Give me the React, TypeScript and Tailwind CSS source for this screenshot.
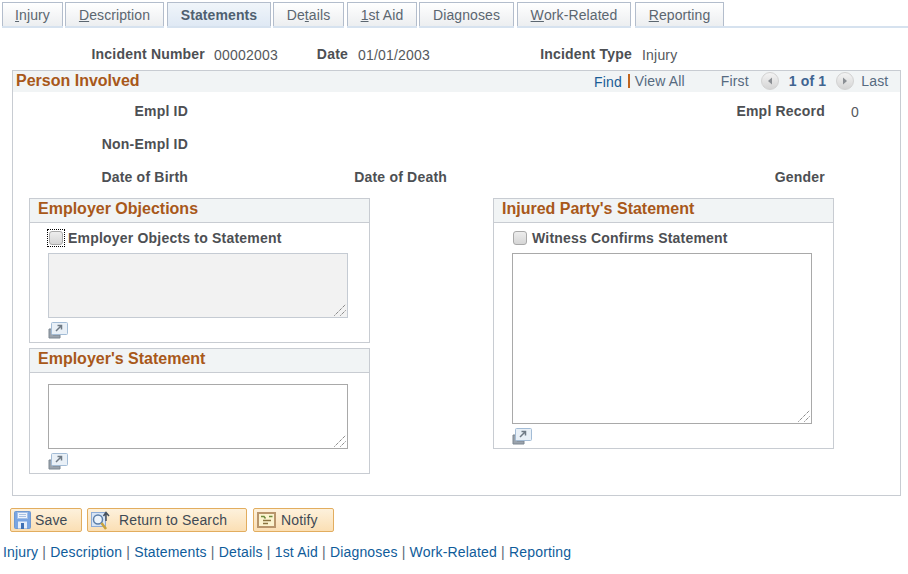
const tabs = [
  { pre: "", key: "I", post: "njury", w: "w-[61px]", ml: "ml-[2px]" },
  { pre: "", key: "D", post: "escription", w: "w-[99px]", ml: "ml-[2px]" },
  { pre: "", key: "", post: "Statements", w: "w-[104px]", ml: "ml-[3px]", active: true },
  { pre: "De", key: "t", post: "ails", w: "w-[71px]", ml: "ml-[2px]" },
  { pre: "", key: "1", post: "st Aid", w: "w-[70px]", ml: "ml-[3px]" },
  { pre: "", key: "", post: "Diagnoses", w: "w-[95px]", ml: "ml-[2px]" },
  { pre: "", key: "W", post: "ork-Related", w: "w-[114px]", ml: "ml-[3px]" },
  { pre: "", key: "R", post: "eporting", w: "w-[89px]", ml: "ml-[4px]" },
];

const links = ["Injury", "Description", "Statements", "Details", "1st Aid", "Diagnoses", "Work-Related", "Reporting"];

function ExpandIcon() {
  return (
    <svg width="20" height="17" viewBox="0 0 20 17" className="block">
      <path d="M1 7h4v6h7v3H1z" fill="#9aa3ad" stroke="#7d8791" strokeWidth="1" />
      <rect x="3.5" y="0.5" width="16" height="12" rx="1" fill="#e9f0f7" stroke="#a3bcd6" />
      <path d="M8 9l5-5M9.5 3.5h4v4" fill="none" stroke="#6f7a85" strokeWidth="1.5" />
    </svg>
  );
}

function Checkbox({ focused }: { focused?: boolean }) {
  return (
    <span className={`flex h-[16px] w-[16px] items-center justify-center ${focused ? "outline-1 outline-dotted outline-black" : ""}`}>
      <span className="block h-[14px] w-[14px] rounded-[3px] border border-[#a9a9a9] bg-gradient-to-b from-[#ededed] to-[#d6d6d6]" />
    </span>
  );
}

function Grip() {
  return (
    <svg width="12" height="12" viewBox="0 0 12 12" className="absolute bottom-[1px] right-[1px]">
      <path d="M0.5 11.5L11.5 0.5M6.5 11.5L11.5 6.5" stroke="#555" strokeWidth="1" strokeDasharray="1 1" />
    </svg>
  );
}

function NoteBox({ height, disabled }: { height: string; disabled?: boolean }) {
  return (
    <div className={`relative w-[300px] border ${height} ${disabled ? "border-[#c5cbd3] bg-[#f2f2f2]" : "border-[#a9a9a9] bg-white"}`}>
      <Grip />
    </div>
  );
}

function Group({ title, children }: { title: string; children: React.ReactNode }) {
  return (
    <div className="w-[341px] border border-[#c8ccd2]">
      <div className="h-[24px] border-b border-[#c8ccd2] bg-[#f1f4f5] pl-[8px] text-[16px] leading-[20px] font-bold text-[#a8581a]">{title}</div>
      <div className="pl-[18px]">{children}</div>
    </div>
  );
}

function CheckRow({ label, focused }: { label: string; focused?: boolean }) {
  return (
    <div className="flex h-[30px] items-center gap-[4px] pb-[1px] text-[14px] font-bold tracking-[0.2px] text-[#4d4f53]">
      <Checkbox focused={focused} />
      <span className="pt-[1px]">{label}</span>
    </div>
  );
}

function SaveIcon() {
  return (
    <svg width="17" height="18" viewBox="0 0 17 18">
      <rect x="0.5" y="0.5" width="16" height="17" rx="1" fill="#79a5e2" stroke="#6f98d0" />
      <rect x="3.5" y="1.5" width="10" height="6" fill="#eef4fc" stroke="#a5c0e6" />
      <path d="M5 3.5h7M5 5.5h7" stroke="#a9c1e2" />
      <rect x="4" y="10.5" width="9" height="7" fill="#e6eef9" />
      <rect x="7" y="12" width="3" height="6" fill="#3f70b4" />
    </svg>
  );
}

function SearchBackIcon() {
  return (
    <svg width="20" height="19" viewBox="0 0 20 19">
      <rect x="0.5" y="1.5" width="14" height="14" fill="#d7e4f5" stroke="#8dabd6" />
      <circle cx="7" cy="8.5" r="4.5" fill="#eef4fb" stroke="#5d7fa8" strokeWidth="1.5" />
      <path d="M10.5 12l4.5 6" stroke="#c9a23a" strokeWidth="2.5" />
      <path d="M15 10V2.5M12.5 5L15 1.5l3 3.5" fill="none" stroke="#47505c" strokeWidth="1.5" />
    </svg>
  );
}

function NotifyIcon() {
  return (
    <svg width="19" height="16" viewBox="0 0 19 16">
      <rect x="1" y="1" width="17" height="14" fill="#fbf3cf" stroke="#b8956c" strokeWidth="2" />
      <path d="M4 4.5h3l1.5 2M12 4.5h3.5" stroke="#6d8a3f" strokeWidth="1.5" fill="none" />
      <path d="M6 8.5h8M6 11.5h5" stroke="#8a7440" strokeWidth="1.5" />
    </svg>
  );
}

function ActionButton({ icon, label, w, gap }: { icon: React.ReactNode; label: string; w: string; gap: string }) {
  return (
    <button className={`flex h-[24px] ${w} ${gap} items-center rounded-[2px] border border-[#e2ad5f] bg-gradient-to-b from-[#fdf1dc] to-[#fbdfb4] pl-[3px] text-[14px] tracking-[0.15px] text-[#3f4a55]`}>
      {icon}
      <span>{label}</span>
    </button>
  );
}

function Arrow({ left }: { left?: boolean }) {
  return (
    <svg width="18" height="18" viewBox="0 0 18 18">
      <defs>
        <linearGradient id={left ? "al" : "ar"} x1="0" y1="0" x2="0" y2="1">
          <stop offset="0" stopColor="#f4f4f4" />
          <stop offset="1" stopColor="#d4d4d4" />
        </linearGradient>
      </defs>
      <circle cx="9" cy="9" r="8.5" fill={`url(#${left ? "al" : "ar"})`} stroke="#d2d2d2" />
      <path d={left ? "M11 5.5v7L7 9z" : "M7 5.5v7L11 9z"} fill="#8b8f94" />
    </svg>
  );
}

export default function App() {
  return (
    <div className="h-[574px] w-[908px] overflow-hidden bg-white font-['Liberation_Sans',Arial,sans-serif] text-[14px] text-[#55585c]">
      {/* tab strip */}
      <div className="flex h-[28px] items-start pt-[2px]">
        {tabs.map((t) => (
          <div key={t.post} className={`${t.ml} ${t.w} h-[26px] border-b-[2px] border-[#d6e2ef]`}>
            <div
              className={`flex h-[24px] items-center justify-center border-x-[1.5px] border-t-[1.5px] border-[#b3bdcc] pt-[1px] tracking-[0.1px] ${
                t.active ? "bg-gradient-to-b from-[#f0f5fa] to-[#dfe9f4] font-bold text-[#4f5f70]" : "bg-gradient-to-b from-white to-[#eceef0] text-[#5b6670]"
              }`}
            >
              {t.pre}
              <span className="underline">{t.key}</span>
              {t.post}
            </div>
          </div>
        ))}
        <div className="mt-[24px] h-[2px] flex-1 bg-[#d6e2ef]" />
      </div>

      {/* incident summary */}
      <div className="flex h-[42px] items-start pt-[18px] leading-[16px] tracking-[0.2px]">
        <span className="w-[205px] text-right font-bold text-[#4d4f53]">Incident Number</span>
        <span className="mt-[1px] ml-[9px] w-[64px]">00002003</span>
        <span className="w-[70px] text-right font-bold text-[#4d4f53]">Date</span>
        <span className="mt-[1px] ml-[10px] w-[71px]">01/01/2003</span>
        <span className="w-[203px] text-right font-bold text-[#4d4f53]">Incident Type</span>
        <span className="mt-[1px] ml-[10px]">Injury</span>
      </div>

      {/* person involved */}
      <div className="ml-[12px] h-[426px] w-[889px] border border-[#c8ccd2]">
        <div className="flex h-[21px] items-center bg-[#f1f4f5] pb-[1px] pl-[3px] tracking-[0.15px]">
          <span className="w-[578px] text-[16px] font-bold tracking-normal text-[#a8581a]">Person Involved</span>
          <span className="pt-[2px] text-[#1a5c96]">Find</span>
          <span className="mr-[5px] ml-[6px] h-[14px] w-[2px] bg-[#c0651f]" />
          <span className="w-[86px] text-[#566a80]">View All</span>
          <span className="w-[40px] text-[#566a80]">First</span>
          <Arrow left />
          <span className="mx-[10px] font-bold text-[#3f6491]">1 of 1</span>
          <Arrow />
          <span className="ml-[7px] text-[#566a80]">Last</span>
        </div>

        <div className="grid grid-cols-[175px_259px_378px_auto] grid-rows-[33px_33px_33px] pt-[3px] font-bold tracking-[0.2px] text-[#4d4f53]">
          <div className="flex items-center justify-end">Empl ID</div>
          <div />
          <div className="flex items-center justify-end">Empl Record</div>
          <div className="flex items-center pt-[2px] pl-[26px] font-normal tracking-normal text-[#55585c]">0</div>
          <div className="flex items-center justify-end">Non-Empl ID</div>
          <div />
          <div />
          <div />
          <div className="flex items-center justify-end">Date of Birth</div>
          <div className="flex items-center justify-end">Date of Death</div>
          <div className="flex items-center justify-end">Gender</div>
          <div />
        </div>

        <div className="mt-[4px] flex items-start pl-[16px]">
          <div className="flex flex-col gap-[5px]">
            <Group title="Employer Objections">
              <CheckRow label="Employer Objects to Statement" focused />
              <NoteBox height="h-[65px]" disabled />
              <div className="mt-[4px] mb-[3px]">
                <ExpandIcon />
              </div>
            </Group>
            <Group title="Employer's Statement">
              <div className="h-[11px]" />
              <NoteBox height="h-[65px]" />
              <div className="mt-[4px] mb-[3px]">
                <ExpandIcon />
              </div>
            </Group>
          </div>
          <div className="ml-[123px]">
            <Group title="Injured Party's Statement">
              <CheckRow label="Witness Confirms Statement" />
              <NoteBox height="h-[171px]" />
              <div className="mt-[4px] mb-[3px]">
                <ExpandIcon />
              </div>
            </Group>
          </div>
        </div>
      </div>

      {/* toolbar */}
      <div className="mt-[12px] ml-[10px] flex gap-[5px]">
        <ActionButton icon={<SaveIcon />} label="Save" w="w-[72px]" gap="gap-[4px]" />
        <ActionButton icon={<SearchBackIcon />} label="Return to Search" w="w-[160px]" gap="gap-[8px]" />
        <div className="ml-[1px]">
          <ActionButton icon={<NotifyIcon />} label="Notify" w="w-[81px]" gap="gap-[5px]" />
        </div>
      </div>

      {/* page links */}
      <div className="mt-[11px] pl-[3px] leading-[18px] tracking-[0.175px] text-[#0f5c9a]">
        {links.map((l, i) => (
          <span key={l}>
            {i > 0 && <span className="text-[#5a6a78]"> | </span>}
            {l}
          </span>
        ))}
      </div>
    </div>
  );
}
